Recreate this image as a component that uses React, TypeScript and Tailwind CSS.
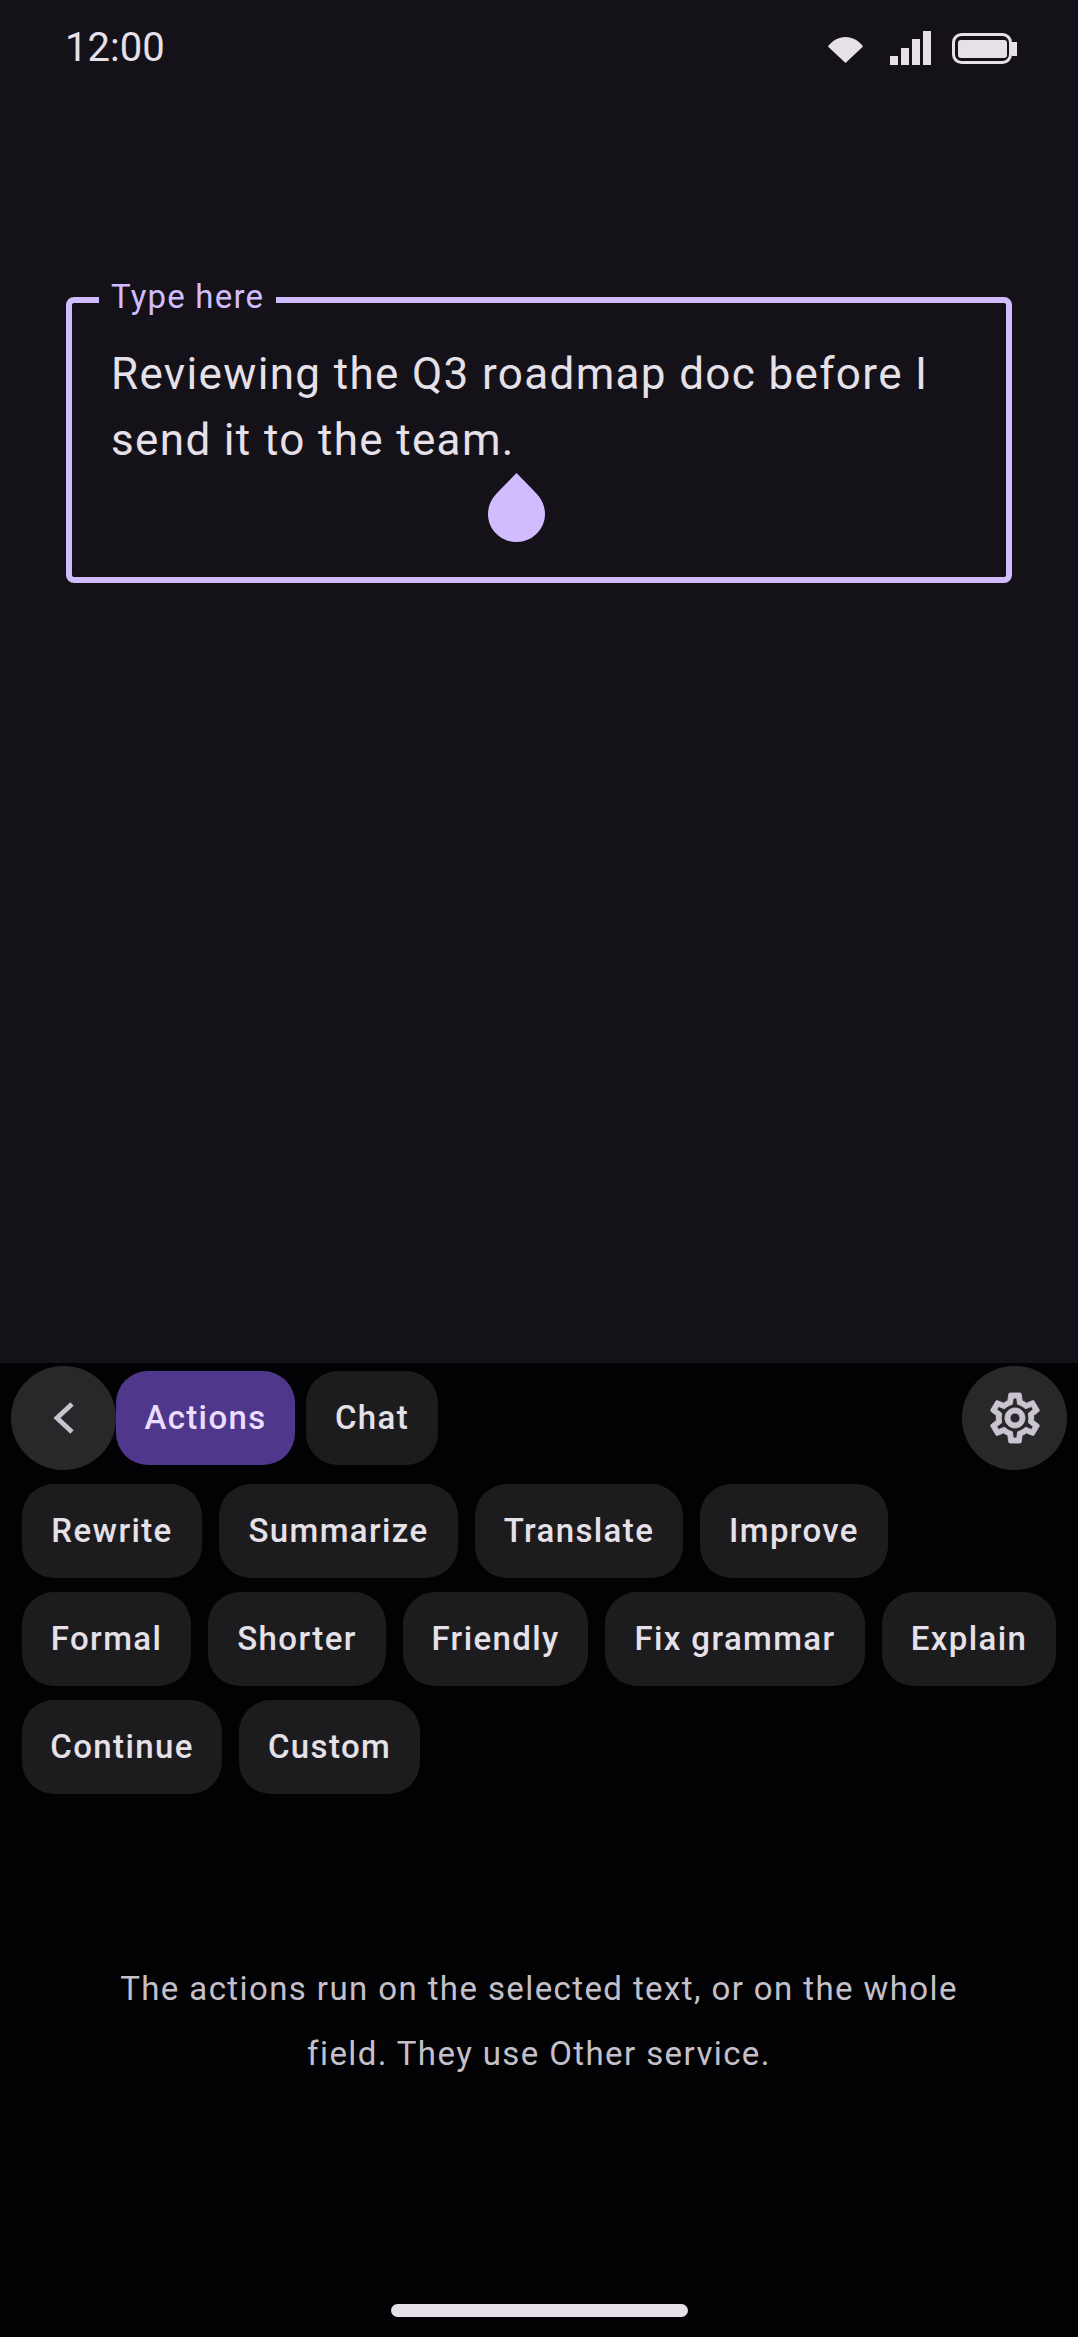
import React from "react";

const rows = [
  [
    { label: "Rewrite", width: "w-[180px]" },
    { label: "Summarize", width: "w-[239px]" },
    { label: "Translate", width: "w-[208px]" },
    { label: "Improve", width: "w-[188px]" },
  ],
  [
    { label: "Formal", width: "w-[169px]" },
    { label: "Shorter", width: "w-[178px]" },
    { label: "Friendly", width: "w-[185px]" },
    { label: "Fix grammar", width: "w-[260px]" },
    { label: "Explain", width: "w-[174px]" },
  ],
  [
    { label: "Continue", width: "w-[200px]" },
    { label: "Custom", width: "w-[181px]" },
  ],
];

function Chip({ label, width, active }: { label: string; width: string; active?: boolean }) {
  return (
    <div
      className={
        "h-[94px] shrink-0 rounded-[32px] flex items-center justify-center text-[33px] font-medium tracking-[1.375px] whitespace-nowrap " +
        width +
        " " +
        (active ? "bg-[#4f378b] text-[#eaddff]" : "bg-[#1c1c1e] text-[#e6e0e9]")
      }
    >
      {label}
    </div>
  );
}

function StatusIcons() {
  return (
    <div className="flex items-center">
      <svg width="35" height="26" viewBox="0 0 35 26" className="mt-[4px]">
        <path d="M0 9.5C4.5 3.5 10.5 0 17.5 0S30.5 3.5 35 9.5L17.5 26Z" fill="#e6e0e9" />
      </svg>
      <svg width="41" height="34" viewBox="0 0 41 34" className="ml-[27px]">
        <rect x="0" y="25" width="8" height="9" fill="#e6e0e9" />
        <rect x="11" y="17" width="8" height="17" fill="#e6e0e9" />
        <rect x="22" y="8" width="8" height="26" fill="#e6e0e9" />
        <rect x="33" y="0" width="8" height="34" fill="#e6e0e9" />
      </svg>
      <svg width="65" height="31" viewBox="0 0 65 31" className="ml-[21px]">
        <rect x="1.5" y="1.5" width="57" height="28" rx="8" fill="none" stroke="#e6e0e9" strokeWidth="3" />
        <rect x="6" y="7" width="49" height="18" rx="3" fill="#e6e0e9" />
        <rect x="60" y="9" width="5" height="14" fill="#e6e0e9" />
      </svg>
    </div>
  );
}

export default function App() {
  return (
    <div className="w-[1078px] h-[2337px] flex flex-col bg-[#141218] overflow-hidden font-['Roboto',sans-serif]">
      <div className="h-[96px] shrink-0 pl-[65px] pr-[61px] flex items-center justify-between">
        <span className="text-[40px] leading-[48px] text-[#e6e0e9]">12:00</span>
        <StatusIcons />
      </div>

      <div className="flex-1 px-[66px] pt-[201px]">
        <div className="relative h-[286px] border-[6px] border-[#d0bcff] rounded-[8px] pl-[39px] pr-[50px] pt-[38px]">
          <span className="absolute left-[27px] top-[-26px] bg-[#141218] pl-[12px] pr-[12px] text-[33px] leading-[40px] tracking-[1.2px] text-[#d0bcff]">
            Type here
          </span>
          <p className="text-[44px] leading-[66px] tracking-[1.35px] text-[#e6e0e9]">
            Reviewing the Q3 roadmap doc before I send it to the team.
          </p>
          <svg
            width="57"
            height="69"
            viewBox="0 0 57 69"
            className="absolute left-[416px] top-[170px]"
          >
            <path
              d="M28.5 0L47 19C53 25 57 32 57 41C57 56.5 44.2 69 28.5 69C12.8 69 0 56.5 0 41C0 32 4 25 10 19Z"
              fill="#d0bcff"
            />
          </svg>
        </div>
      </div>

      <div className="h-[974px] shrink-0 bg-[#020204] flex flex-col">
        <div className="pt-[3px] pl-[11px] pr-[11px] h-[107px] flex items-center">
          <div className="w-[105px] h-[104px] rounded-full bg-[#28282a] flex items-center justify-center">
            <svg width="26" height="34" viewBox="0 0 26 34" fill="none">
              <path d="M21 3L6 17L21 31" stroke="#cac4d0" strokeWidth="4.8" />
            </svg>
          </div>
          <div className="flex gap-[11px]">
            <Chip label="Actions" width="w-[179px]" active />
            <Chip label="Chat" width="w-[132px]" />
          </div>
          <div className="ml-auto w-[105px] h-[104px] rounded-full bg-[#28282a] flex items-center justify-center">
            <svg width="60" height="60" viewBox="0 0 24 24" fill="#cac4d0" stroke="#cac4d0" strokeWidth="0.35">
              <path d="M19.43 12.98c.04-.32.07-.64.07-.98 0-.34-.03-.66-.07-.98l2.11-1.65c.19-.15.24-.42.12-.64l-2-3.46c-.09-.16-.26-.25-.44-.25-.06 0-.12.01-.17.03l-2.49 1c-.52-.4-1.08-.73-1.69-.98l-.38-2.65C14.46 2.18 14.25 2 14 2h-4c-.25 0-.46.18-.49.42l-.38 2.65c-.61.25-1.17.59-1.69.98l-2.49-1c-.06-.02-.12-.03-.18-.03-.17 0-.34.09-.43.25l-2 3.46c-.13.22-.07.49.12.64l2.11 1.65c-.04.32-.07.65-.07.98 0 .33.03.66.07.98l-2.11 1.65c-.19.15-.24.42-.12.64l2 3.46c.09.16.26.25.44.25.06 0 .12-.01.17-.03l2.49-1c.52.4 1.08.73 1.69.98l.38 2.65c.03.24.24.42.49.42h4c.25 0 .46-.18.49-.42l.38-2.65c.61-.25 1.17-.59 1.69-.98l2.49 1c.06.02.12.03.18.03.17 0 .34-.09.43-.25l2-3.46c.12-.22.07-.49-.12-.64l-2.11-1.65zm-1.98-1.71c.04.31.05.52.05.73 0 .21-.02.43-.05.73l-.14 1.13.89.7 1.08.84-.7 1.21-1.27-.51-1.04-.42-.9.68c-.43.32-.84.56-1.25.73l-1.06.43-.16 1.13-.2 1.35h-1.4l-.19-1.35-.16-1.13-1.06-.43c-.43-.18-.83-.41-1.23-.71l-.91-.7-1.06.43-1.27.51-.7-1.21 1.08-.84.89-.7-.14-1.13c-.03-.31-.05-.54-.05-.74s.02-.43.05-.73l.14-1.13-.89-.7-1.08-.84.7-1.21 1.27.51 1.04.42.9-.68c.43-.32.84-.56 1.25-.73l1.06-.43.16-1.13.2-1.35h1.39l.19 1.35.16 1.13 1.06.43c.43.18.83.41 1.23.71l.91.7 1.06-.43 1.27-.51.7 1.21-1.07.85-.89.7.14 1.13zM12 8c-2.21 0-4 1.79-4 4s1.79 4 4 4 4-1.79 4-4-1.79-4-4-4zm0 6c-1.1 0-2-.9-2-2s.9-2 2-2 2 .9 2 2-.9 2-2 2z" />
            </svg>
          </div>
        </div>

        <div className="mt-[14px] pl-[22px] flex flex-col gap-[14px]">
          {rows.map((row) => (
            <div key={row[0].label} className="flex gap-[17px]">
              {row.map((chip) => (
                <Chip key={chip.label} label={chip.label} width={chip.width} />
              ))}
            </div>
          ))}
        </div>

        <p className="mt-[162px] px-[100px] text-center text-[33px] leading-[65px] tracking-[1.4px] text-[#c4c0ca]">
          The actions run on the selected text, or on the whole field. They use Other service.
        </p>

        <div className="mt-auto mb-[20px] mx-auto w-[297px] h-[13px] rounded-full bg-[#e6e0e9]" />
      </div>
    </div>
  );
}
